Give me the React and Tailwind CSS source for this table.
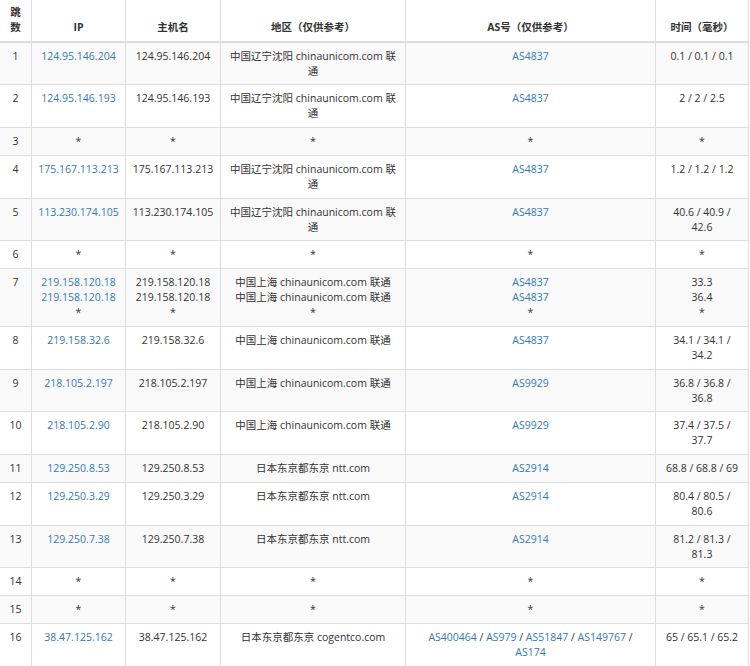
const rows = [
  { hop: 1, ip: ["124.95.146.204"], host: ["124.95.146.204"], region: ["中国辽宁沈阳 chinaunicom.com 联通"], as: [["AS4837"]], time: ["0.1 / 0.1 / 0.1"] },
  { hop: 2, ip: ["124.95.146.193"], host: ["124.95.146.193"], region: ["中国辽宁沈阳 chinaunicom.com 联通"], as: [["AS4837"]], time: ["2 / 2 / 2.5"] },
  { hop: 3, ip: ["*"], host: ["*"], region: ["*"], as: [["*"]], time: ["*"] },
  { hop: 4, ip: ["175.167.113.213"], host: ["175.167.113.213"], region: ["中国辽宁沈阳 chinaunicom.com 联通"], as: [["AS4837"]], time: ["1.2 / 1.2 / 1.2"] },
  { hop: 5, ip: ["113.230.174.105"], host: ["113.230.174.105"], region: ["中国辽宁沈阳 chinaunicom.com 联通"], as: [["AS4837"]], time: ["40.6 / 40.9 / 42.6"] },
  { hop: 6, ip: ["*"], host: ["*"], region: ["*"], as: [["*"]], time: ["*"] },
  {
    hop: 7,
    ip: ["219.158.120.18", "219.158.120.18", "*"],
    host: ["219.158.120.18", "219.158.120.18", "*"],
    region: ["中国上海 chinaunicom.com 联通", "中国上海 chinaunicom.com 联通", "*"],
    as: [["AS4837"], ["AS4837"], ["*"]],
    time: ["33.3", "36.4", "*"],
  },
  { hop: 8, ip: ["219.158.32.6"], host: ["219.158.32.6"], region: ["中国上海 chinaunicom.com 联通"], as: [["AS4837"]], time: ["34.1 / 34.1 / 34.2"] },
  { hop: 9, ip: ["218.105.2.197"], host: ["218.105.2.197"], region: ["中国上海 chinaunicom.com 联通"], as: [["AS9929"]], time: ["36.8 / 36.8 / 36.8"] },
  { hop: 10, ip: ["218.105.2.90"], host: ["218.105.2.90"], region: ["中国上海 chinaunicom.com 联通"], as: [["AS9929"]], time: ["37.4 / 37.5 / 37.7"] },
  { hop: 11, ip: ["129.250.8.53"], host: ["129.250.8.53"], region: ["日本东京都东京 ntt.com"], as: [["AS2914"]], time: ["68.8 / 68.8 / 69"] },
  { hop: 12, ip: ["129.250.3.29"], host: ["129.250.3.29"], region: ["日本东京都东京 ntt.com"], as: [["AS2914"]], time: ["80.4 / 80.5 / 80.6"] },
  { hop: 13, ip: ["129.250.7.38"], host: ["129.250.7.38"], region: ["日本东京都东京 ntt.com"], as: [["AS2914"]], time: ["81.2 / 81.3 / 81.3"] },
  { hop: 14, ip: ["*"], host: ["*"], region: ["*"], as: [["*"]], time: ["*"] },
  { hop: 15, ip: ["*"], host: ["*"], region: ["*"], as: [["*"]], time: ["*"] },
  {
    hop: 16,
    ip: ["38.47.125.162"],
    host: ["38.47.125.162"],
    region: ["日本东京都东京 cogentco.com"],
    as: [["AS400464", "AS979", "AS51847", "AS149767", "AS174"]],
    time: ["65 / 65.1 / 65.2"],
  },
];

const cell =
  "border-r border-b border-[#dddddd] px-[6px] pt-[6px] pb-[5.75px] align-top text-center";

// a value is a link unless it's a "*" placeholder
const Val = ({ text, link }) => {
  if (text === "*" || !link) return <span>{text}</span>;
  return <a className="text-[#337ab7]">{text}</a>;
};

const Lines = ({ items, link }) => (
  <>
    {items.map((t, i) => (
      <div key={i}>
        <Val text={t} link={link} />
      </div>
    ))}
  </>
);

const AsLines = ({ items }) => (
  <>
    {items.map((list, i) => (
      <div key={i}>
        {list.map((as, j) => (
          <span key={j}>
            <Val text={as} link />
            {j < list.length - 1 ? " / " : ""}
          </span>
        ))}
      </div>
    ))}
  </>
);

const headers = ["跳数", "IP", "主机名", "地区（仅供参考）", "AS号（仅供参考）", "时间（毫秒）"];

export default function App() {
  return (
    <div
      className="w-[750px] h-[666px] overflow-hidden bg-white text-[#333333] text-[10.5px] leading-[15px]"
      style={{ fontFamily: '"Open Sans", "Noto Sans CJK SC", sans-serif' }}
    >
      <table className="table-fixed border-separate border-spacing-0 w-[749px]">
        <colgroup>
          <col className="w-[32px]" />
          <col className="w-[94px]" />
          <col className="w-[95px]" />
          <col className="w-[185px]" />
          <col className="w-[250px]" />
          <col className="w-[93px]" />
        </colgroup>
        <thead>
          <tr>
            {headers.map((h) => (
              <th
                key={h}
                className="border-r border-b-2 border-[#dddddd] px-[6px] pt-[4.5px] pb-[6px] align-bottom text-center font-bold"
              >
                {h}
              </th>
            ))}
          </tr>
        </thead>
        <tbody>
          {rows.map((r) => (
            <tr key={r.hop} className={r.hop % 2 === 1 ? "bg-[#f9f9f9]" : "bg-white"}>
              <td className={cell}>{r.hop}</td>
              <td className={cell}>
                <Lines items={r.ip} link />
              </td>
              <td className={cell}>
                <Lines items={r.host} />
              </td>
              <td className={cell}>
                <Lines items={r.region} />
              </td>
              <td className={cell}>
                <AsLines items={r.as} />
              </td>
              <td className={cell}>
                <Lines items={r.time} />
              </td>
            </tr>
          ))}
        </tbody>
      </table>
    </div>
  );
}
